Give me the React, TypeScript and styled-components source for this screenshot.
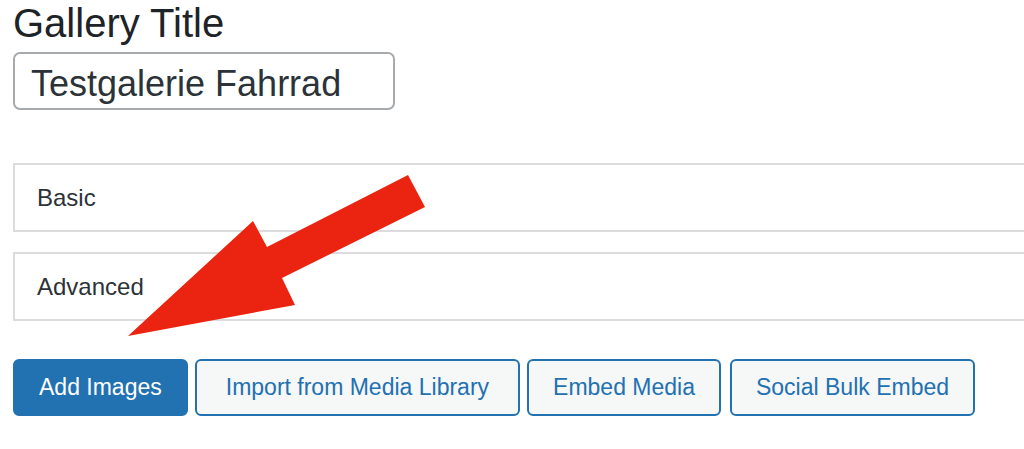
import styled, { createGlobalStyle } from "styled-components";

const GlobalStyle = createGlobalStyle`
  html, body {
    margin: 0;
    padding: 0;
    background: #fff;
    overflow: hidden;
  }
  body {
    font-family: "Liberation Sans", Arial, sans-serif;
  }
`;

const Page = styled.div`
  position: relative;
  width: 1024px;
  height: 449px;
  overflow: hidden;
  padding-left: 13px;
  box-sizing: border-box;
`;

const Heading = styled.h1`
  margin: 0;
  font-size: 40px;
  line-height: 46px;
  font-weight: 400;
  color: #1d2327;
`;

const TitleInput = styled.input`
  display: block;
  margin-top: 6px;
  width: 382px;
  height: 58px;
  box-sizing: border-box;
  padding: 6px 16px 0;
  border: 2px solid #a7aaad;
  border-radius: 7px;
  font-family: "Liberation Sans", Arial, sans-serif;
  font-size: 36px;
  color: #2c3338;
  background: #fff;
  outline: none;
`;

const Panels = styled.div`
  display: flex;
  flex-direction: column;
  gap: 20px;
  margin-top: 53px;
  margin-right: -40px;
`;

const Panel = styled.div`
  height: 69px;
  box-sizing: border-box;
  border: 2px solid #dcdcde;
  padding-left: 22px;
  display: flex;
  align-items: center;
  font-size: 24px;
  color: #2c3338;
  background: #fff;
`;

const ButtonRow = styled.div`
  display: flex;
  gap: 7px;
  margin-top: 38px;
`;

const Button = styled.button<{ $primary?: boolean; $pad?: number }>`
  height: 57px;
  box-sizing: border-box;
  padding: 0 ${(p) => p.$pad ?? 24}px;
  border-radius: 6px;
  border: 2px solid #2271b1;
  background: ${(p) => (p.$primary ? "#2271b1" : "#f6f7f7")};
  color: ${(p) => (p.$primary ? "#fff" : "#2271b1")};
  font-family: "Liberation Sans", Arial, sans-serif;
  font-size: 23px;
  cursor: pointer;

  &:last-child {
    margin-left: 2px;
  }
`;

const ArrowLayer = styled.svg`
  position: absolute;
  left: 0;
  top: 0;
  pointer-events: none;
`;

export default function App() {
  return (
    <Page>
      <GlobalStyle />
      <Heading>Gallery Title</Heading>
      <TitleInput type="text" value="Testgalerie Fahrrad" readOnly />
      <Panels>
        <Panel>Basic</Panel>
        <Panel>Advanced</Panel>
      </Panels>
      <ButtonRow>
        <Button $primary>Add Images</Button>
        <Button $pad={29}>Import from Media Library</Button>
        <Button>Embed Media</Button>
        <Button>Social Bulk Embed</Button>
      </ButtonRow>
      <ArrowLayer width="1024" height="449" viewBox="0 0 1024 449">
        <polygon
          points="128,336 253,221 267,247 408,175 425,207 282,278 295,305"
          fill="#ea2410"
        />
      </ArrowLayer>
    </Page>
  );
}
